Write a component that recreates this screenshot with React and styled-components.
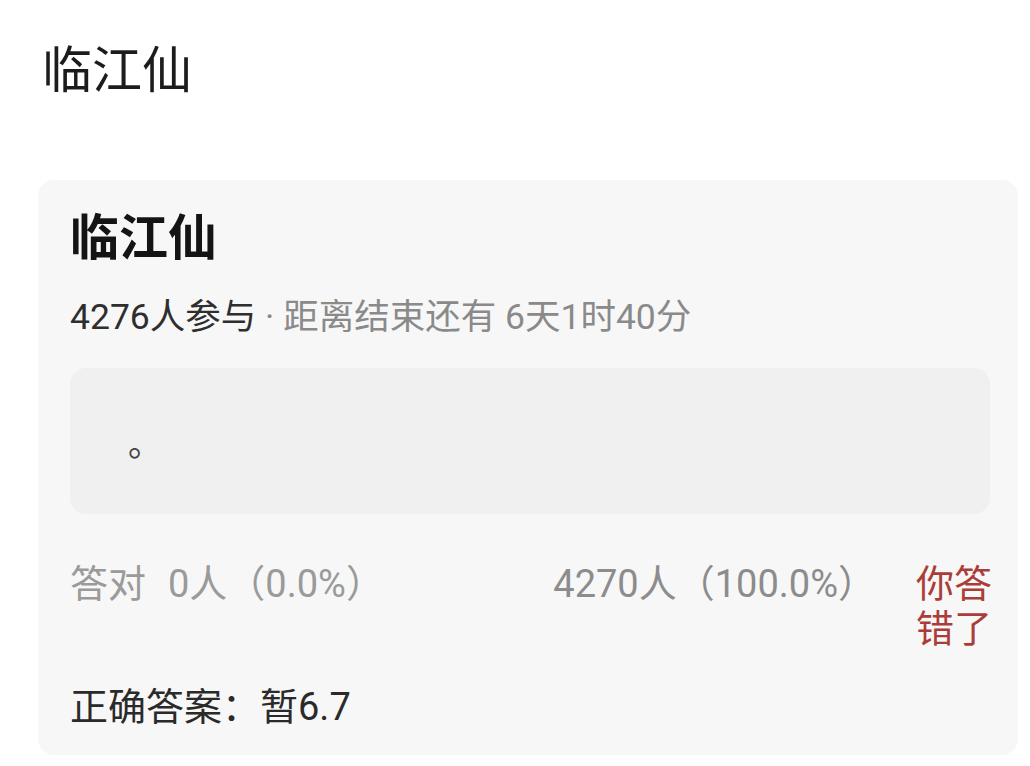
import React from 'react'
import styled, { createGlobalStyle } from 'styled-components'

const GlobalStyle = createGlobalStyle`
  html, body {
    margin: 0;
    padding: 0;
    background: #ffffff;
  }
  body {
    font-family: Roboto, "Noto Sans CJK SC", sans-serif;
    color: #222;
  }
`

const Page = styled.div`
  padding: 40px 12px 0 38px;
  box-sizing: border-box;
  width: 1030px;
  height: 766px;
  overflow: hidden;
`

const PageTitle = styled.h2`
  margin: 0 0 0 4px;
  font-size: 50px;
  line-height: 62px;
  font-weight: 400;
  color: #1c1c1c;
`

const Card = styled.section`
  margin-top: 78px;
  background: #f7f7f7;
  border-radius: 16px;
  padding: 30px 24px 24px 32px;
  height: 575px;
  box-sizing: border-box;
`

const CardTitle = styled.h1`
  margin: 0;
  font-size: 49px;
  line-height: 58px;
  font-weight: 700;
  color: #141414;
`

const Meta = styled.div`
  margin-top: 27px;
  font-size: 35.5px;
  line-height: 44px;
  color: #8a8a8a;
`

const MetaStrong = styled.span`
  color: #2e2e2e;
`

const Question = styled.div`
  margin: 29px 4px 0 0;
  height: 146px;
  border-radius: 16px;
  background: #f0f0f0;
  padding: 56px 0 0 58px;
  box-sizing: border-box;
  font-size: 34px;
  line-height: 40px;
  color: #444;
`

const Stats = styled.div`
  display: flex;
  align-items: flex-start;
  margin-top: 48px;
`

const StatText = styled.div`
  font-size: 38px;
  line-height: 45px;
  color: ${p => p.$tone || '#9a9a9a'};
  flex: ${p => (p.$grow ? 1 : 'none')};
`

const Gap = styled.span`
  display: inline-block;
  width: 22px;
`

const Verdict = styled.div`
  width: 78px;
  margin-left: 40px;
  font-size: 38px;
  line-height: 45px;
  color: #ab3d39;
`

const Answer = styled.div`
  margin-top: 32px;
  font-size: 38px;
  line-height: 46px;
  color: #2a2a2a;
`

export default function App() {
  return (
    <>
      <GlobalStyle />
      <Page>
        <PageTitle>临江仙</PageTitle>
        <Card>
          <CardTitle>临江仙</CardTitle>
          <Meta>
            <MetaStrong>4276人参与</MetaStrong> · 距离结束还有 6天1时40分
          </Meta>
          <Question>。</Question>
          <Stats>
            <StatText $grow>
              答对<Gap />0人（0.0%）
            </StatText>
            <StatText $tone="#8c8c8c">4270人（100.0%）</StatText>
            <Verdict>你答错了</Verdict>
          </Stats>
          <Answer>正确答案：暂6.7</Answer>
        </Card>
      </Page>
    </>
  )
}
